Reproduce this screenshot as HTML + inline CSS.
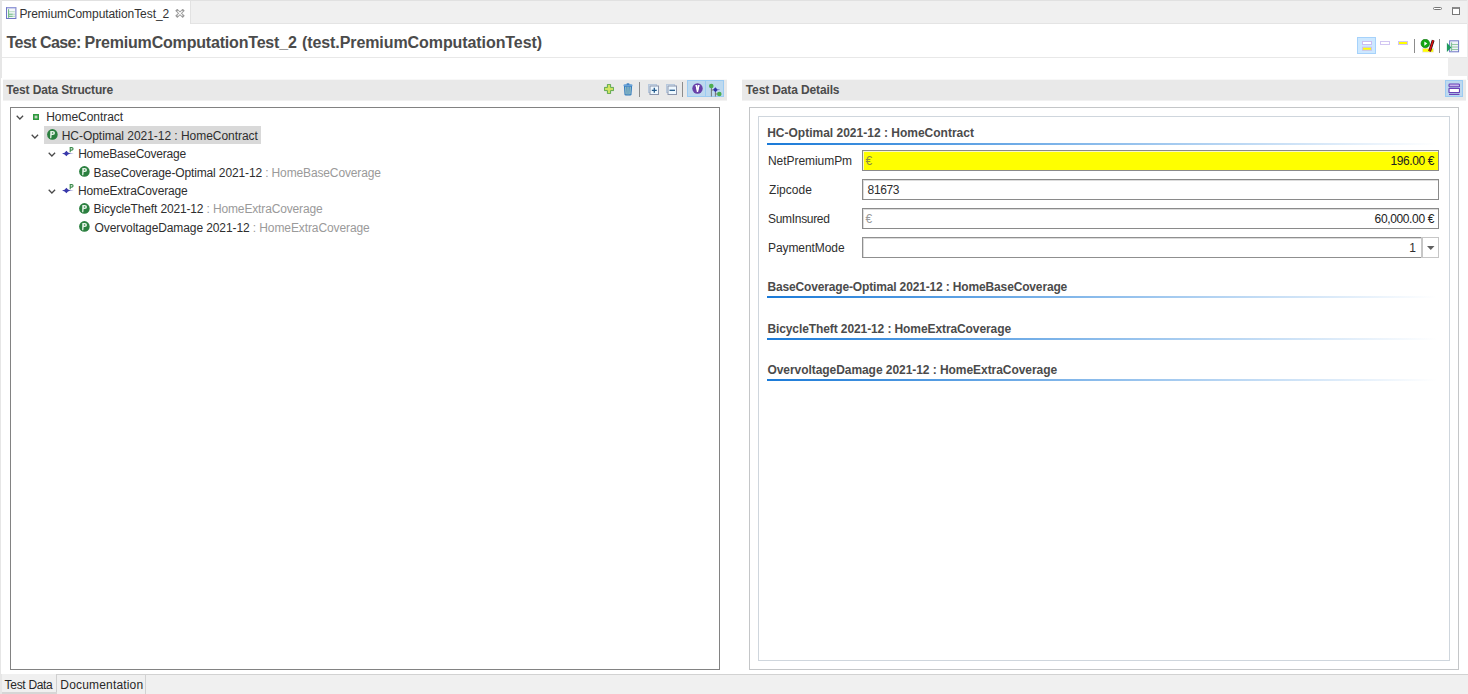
<!DOCTYPE html>
<html><head><meta charset="utf-8">
<style>
*{box-sizing:border-box;margin:0;padding:0}
html,body{width:1468px;height:694px;overflow:hidden;background:#fff}
body{position:relative;font-family:"Liberation Sans",sans-serif;font-size:12px;color:#2e2e2e}
.a{position:absolute}
.t{position:absolute;white-space:pre;line-height:14px}
.b{font-weight:bold}
.g{color:#9a9a9a}
.sec{color:#4b4b4b}
.fld{position:absolute;left:862px;width:577px;height:21px;border:1px solid #8a8a8a;background:#fff;box-shadow:inset 1px 1px 0 #dcdcdc}
.chev{position:absolute}
</style></head><body>

<!-- ===== top tab bar ===== -->
<div class="a" style="left:0;top:0;width:1468px;height:24px;background:#f0f0f0"></div>
<div class="a" style="left:0;top:0;width:1468px;height:1px;background:#e1e1e1"></div>
<div class="a" style="left:0;top:23px;width:1468px;height:1px;background:#e4e4e4"></div>
<div class="a" style="left:1467px;top:0;width:1px;height:80px;background:#ececec"></div>
<div class="a" style="left:2px;top:1px;width:188px;height:23px;background:#fff"></div>
<div class="a" style="left:190px;top:1px;width:1px;height:23px;background:#e2e2e2"></div>
<!-- tab icon -->
<svg class="a" style="left:6px;top:7px" width="11" height="12" viewBox="0 0 11 12">
 <rect x="0.5" y="0.6" width="9.4" height="10.9" fill="#f4f7fa" stroke="#6e76c4"/>
 <path d="M1 0.9h8.9" stroke="#a4aae2" stroke-width="1"/>
 <path d="M2.6 2.2v8.6" stroke="#5aae72" stroke-width="0.9"/>
 <path d="M3 4.7h5.8" stroke="#b4d8c0" stroke-width="0.9"/>
 <path d="M3 7.2h3.8M3 9.3h3.8" stroke="#4ea868" stroke-width="0.9"/>
 <path d="M6.8 7.2h2.2M6.8 9.3h2.2" stroke="#a8d4b4" stroke-width="0.9"/>
</svg>
<div class="t" style="left:19.4px;top:6.8px;color:#333;letter-spacing:-0.07px">PremiumComputationTest_2</div>
<svg class="a" style="left:175px;top:8.5px" width="10" height="9" viewBox="0 0 10 9">
 <path d="M2.3 1.7L7.7 6.9M7.7 1.7L2.3 6.9" stroke="#9a9a9a" stroke-width="2.9" stroke-linecap="square" fill="none"/>
 <path d="M2.6 2L7.4 6.6M7.4 2L2.6 6.6" stroke="#fff" stroke-width="1.1" fill="none"/>
</svg>
<!-- min/max -->
<div class="a" style="left:1433px;top:7px;width:9px;height:3px;border:1px solid #777;border-radius:1.5px;background:#fff"></div>
<div class="a" style="left:1452px;top:7px;width:8px;height:8px;border:1px solid #777;border-top:2px solid #8a8a8a;background:#fff"></div>

<!-- left frame border -->
<div class="a" style="left:0;top:0;width:2px;height:78px;background:#e6e6e6"></div>
<div class="a" style="left:0;top:78px;width:1px;height:596px;background:#e6e6e6"></div>

<!-- ===== form header ===== -->
<div class="t b" style="left:6.5px;top:34px;font-size:16px;line-height:18px;color:#4b4b4b;letter-spacing:-0.55px">Test Case:</div>
<div class="t b" style="left:84.5px;top:34px;font-size:16px;line-height:18px;color:#4b4b4b;letter-spacing:-0.187px">PremiumComputationTest_2</div>
<div class="t b" style="left:301.9px;top:34px;font-size:16px;line-height:18px;color:#4b4b4b;letter-spacing:-0.079px">(test.PremiumComputationTest)</div>
<div class="a" style="left:2px;top:57px;width:1465px;height:1px;background:#e8e8e8"></div>

<!-- header toolbar -->
<div class="a" style="left:1357px;top:37px;width:19px;height:17px;background:#cde8ff;border:1px solid #a6d2fb"></div>
<svg class="a" style="left:1362px;top:41px" width="10" height="10" viewBox="0 0 10 10">
 <rect x="0.5" y="0.5" width="9" height="3" fill="#fff" stroke="#cbbdf0"/>
 <rect x="0.5" y="6.2" width="9" height="3" fill="#ffff00" stroke="#cbbdf0"/>
</svg>
<svg class="a" style="left:1380px;top:41px" width="10" height="4.5" viewBox="0 0 10 4.5">
 <rect x="0.5" y="0.5" width="9" height="3" fill="#fff" stroke="#d2c6f2"/>
</svg>
<svg class="a" style="left:1398px;top:41px" width="10" height="4.5" viewBox="0 0 10 4.5">
 <rect x="0.5" y="0.5" width="9" height="3" fill="#ffff00" stroke="#d2c6f2"/>
</svg>
<div class="a" style="left:1414px;top:39px;width:1px;height:14px;background:#8c8c8c"></div>
<svg class="a" style="left:1420px;top:39px" width="15" height="14" viewBox="0 0 15 14">
 <rect x="2.5" y="9.3" width="11" height="3.8" fill="#ffff00" stroke="#e4dcf8" stroke-width="0.6"/>
 <circle cx="5.3" cy="4.5" r="4.3" fill="#12a612"/>
 <circle cx="5.3" cy="4.5" r="4.3" fill="none" stroke="#0a6a0a" stroke-width="0.6"/>
 <path d="M4.3 2.5v4.2l3-2.1z" fill="#fff"/>
 <path d="M13.2 1.2L9.6 12.2" stroke="#111" stroke-width="2.8"/>
 <path d="M13.2 1.2L9.6 12.2" stroke="#e01010" stroke-width="1.6"/>
</svg>
<div class="a" style="left:1439px;top:39px;width:1px;height:14px;background:#8c8c8c"></div>
<svg class="a" style="left:1446px;top:39.5px" width="14" height="13" viewBox="0 0 14 13">
 <rect x="3.6" y="0.8" width="9" height="11" fill="#eef2f8" stroke="#7078c6" stroke-width="1"/>
 <path d="M5.6 2.5v8.5" stroke="#5aae72" stroke-width="0.8"/>
 <path d="M6 4.5h6M6 7h6M6 9.5h6" stroke="#88c49a" stroke-width="0.9"/>
 <path d="M0.9 2.8v9.3l4.4-4.6z" fill="#1e9a5e"/>
</svg>

<!-- body grey block -->
<div class="a" style="left:1448px;top:58px;width:19px;height:18px;background:#ededed"></div>

<!-- ===== LEFT SECTION ===== -->
<div class="a" style="left:3px;top:80px;width:724px;height:20px;background:#e9e9e9;box-shadow:0 1px 0 #f2f2f2,0 -1px 0 #f8f8f8"></div>
<div class="t b sec" style="left:6.3px;top:82.9px;letter-spacing:-0.156px">Test Data Structure</div>
<!-- tree toolbar -->
<svg class="a" style="left:604px;top:84px" width="10" height="10" viewBox="0 0 10 10">
 <path d="M3.4 0.4h3.2v3h3v3.2h-3v3h-3.2v-3h-3v-3.2h3z" fill="#c4dc5c" stroke="#449a3c" stroke-width="0.8"/>
 <path d="M5 1.2v7.6M1.2 5h7.6" stroke="#d8e868" stroke-width="1"/>
</svg>
<svg class="a" style="left:623px;top:82.5px" width="10" height="13" viewBox="0 0 10 13">
 <path d="M0.9 3h8.2l-0.6 8.2q-0.2 1.2-1.4 1.2h-4.2q-1.2 0-1.4-1.2z" fill="#2f78bc"/>
 <path d="M2.8 3.8l0.3 7.6M5 3.8v7.8M7.2 3.8l-0.3 7.6" stroke="#cfe6c8" stroke-width="0.9"/>
 <ellipse cx="5" cy="2.2" rx="4.7" ry="1.2" fill="#6aa2d8"/>
 <ellipse cx="5" cy="1" rx="1.6" ry="0.8" fill="#2f78bc"/>
</svg>
<div class="a" style="left:639px;top:82px;width:1px;height:14.5px;background:#8c8c8c"></div>
<svg class="a" style="left:647.5px;top:84px" width="11" height="11" viewBox="0 0 11 11">
 <rect x="0.5" y="0.5" width="8" height="8" fill="#dbeaf6" stroke="#b8c8dc"/>
 <rect x="2" y="2" width="8.5" height="8.5" fill="#eef8ff" stroke="#8a94ac"/>
 <path d="M6.3 3.8v5M3.8 6.3h5" stroke="#235a8c" stroke-width="1.3"/>
</svg>
<svg class="a" style="left:666px;top:84px" width="11" height="11" viewBox="0 0 11 11">
 <rect x="0.5" y="0.5" width="8" height="8" fill="#dbeaf6" stroke="#b8c8dc"/>
 <rect x="2" y="2" width="8.5" height="8.5" fill="#eef8ff" stroke="#8a94ac"/>
 <path d="M3.5 6.3h5.5" stroke="#235a8c" stroke-width="1.3"/>
</svg>
<div class="a" style="left:682px;top:82px;width:1px;height:14.5px;background:#8c8c8c"></div>
<div class="a" style="left:687px;top:80px;width:37px;height:17px;background:#bdd9ef;border:1px solid #9ccbf2"></div>
<div class="a" style="left:705px;top:81px;width:1px;height:15px;background:#9ccbf2"></div>
<svg class="a" style="left:691.5px;top:83.3px" width="11" height="11" viewBox="0 0 11 11">
 <circle cx="5.5" cy="5.5" r="5.2" fill="#6840a8"/>
 <path d="M3.4 2.2h1.8l0.5 5.8h-0.4zM5.8 2.2h1.8l-1.9 6.8h-0.3z" fill="#fff"/>
 <path d="M4.2 2.2L5.5 8.8L6.8 2.2" stroke="#fff" stroke-width="1.3" fill="none"/>
</svg>
<svg class="a" style="left:708px;top:82.5px" width="15" height="14" viewBox="0 0 15 14">
 <path d="M3.4 3v10.5M3.4 7h2M7.4 9v4.5M7.4 11h2" stroke="#6a6a6a" stroke-width="0.9"/>
 <circle cx="3.3" cy="3" r="2.3" fill="#4cae50"/>
 <path d="M5 6.8L7.4 4.3L9.4 6.4L12.3 6.8L9.4 7.2L7.4 9.3z" fill="#3232a8"/>
 <circle cx="11.3" cy="11" r="2.3" fill="#4cae50"/>
</svg>

<!-- tree -->
<div class="a" style="left:10px;top:107px;width:710px;height:563px;border:1px solid #828282"></div>
<div class="a" style="left:44px;top:126px;width:217px;height:18px;background:#d9d9d9"></div>

<!-- chevrons -->
<svg class="chev" style="left:15.5px;top:115px" width="8" height="5" viewBox="0 0 8 5"><path d="M0.7 0.7L3.9 4L7.1 0.7" stroke="#4a4a4a" stroke-width="1.25" fill="none"/></svg>
<svg class="chev" style="left:31.3px;top:133.5px" width="8" height="5" viewBox="0 0 8 5"><path d="M0.7 0.7L3.9 4L7.1 0.7" stroke="#4a4a4a" stroke-width="1.25" fill="none"/></svg>
<svg class="chev" style="left:47.7px;top:151.9px" width="8" height="5" viewBox="0 0 8 5"><path d="M0.7 0.7L3.9 4L7.1 0.7" stroke="#4a4a4a" stroke-width="1.25" fill="none"/></svg>
<svg class="chev" style="left:47.7px;top:188.7px" width="8" height="5" viewBox="0 0 8 5"><path d="M0.7 0.7L3.9 4L7.1 0.7" stroke="#4a4a4a" stroke-width="1.25" fill="none"/></svg>

<!-- icons -->
<svg class="a" style="left:33px;top:113.8px" width="6" height="6" viewBox="0 0 6 6"><rect x="0.8" y="0.8" width="4.4" height="4.4" fill="#c4d4c4" stroke="#2e9a3e" stroke-width="1.6"/></svg>
<svg class="a" style="left:46.8px;top:128.9px" width="11" height="11" viewBox="0 0 11 11"><circle cx="5.4" cy="5.4" r="5.3" fill="#2c8040"/><path d="M3.3 1.9h2.6a2 2 0 0 1 0 4.2H4.7l-0.4 3.2h-1.2z" fill="#e4f2e6"/><circle cx="5.6" cy="4" r="0.8" fill="#2c8040"/></svg>
<svg class="a" style="left:62px;top:147px" width="12" height="10" viewBox="0 0 12 10"><path d="M0 6.5Q3 6.1 4.4 3.7Q5.8 6.1 8 6.3L11.8 6.5L8 6.7Q5.8 6.9 4.4 9.3Q3 6.9 0 6.5z" fill="#3838aa"/><path d="M8.2 5.2V0.6h1.6a1.2 1.2 0 0 1 0 2.5H8.2" stroke="#3c8c4c" stroke-width="1.1" fill="none"/></svg>
<svg class="a" style="left:78.6px;top:166.1px" width="11" height="11" viewBox="0 0 11 11"><circle cx="5.4" cy="5.4" r="5.3" fill="#2c8040"/><path d="M3.3 1.9h2.6a2 2 0 0 1 0 4.2H4.7l-0.4 3.2h-1.2z" fill="#e4f2e6"/><circle cx="5.6" cy="4" r="0.8" fill="#2c8040"/></svg>
<svg class="a" style="left:62px;top:183.8px" width="12" height="10" viewBox="0 0 12 10"><path d="M0 6.5Q3 6.1 4.4 3.7Q5.8 6.1 8 6.3L11.8 6.5L8 6.7Q5.8 6.9 4.4 9.3Q3 6.9 0 6.5z" fill="#3838aa"/><path d="M8.2 5.2V0.6h1.6a1.2 1.2 0 0 1 0 2.5H8.2" stroke="#3c8c4c" stroke-width="1.1" fill="none"/></svg>
<svg class="a" style="left:78.6px;top:202.5px" width="11" height="11" viewBox="0 0 11 11"><circle cx="5.4" cy="5.4" r="5.3" fill="#2c8040"/><path d="M3.3 1.9h2.6a2 2 0 0 1 0 4.2H4.7l-0.4 3.2h-1.2z" fill="#e4f2e6"/><circle cx="5.6" cy="4" r="0.8" fill="#2c8040"/></svg>
<svg class="a" style="left:78.6px;top:221px" width="11" height="11" viewBox="0 0 11 11"><circle cx="5.4" cy="5.4" r="5.3" fill="#2c8040"/><path d="M3.3 1.9h2.6a2 2 0 0 1 0 4.2H4.7l-0.4 3.2h-1.2z" fill="#e4f2e6"/><circle cx="5.6" cy="4" r="0.8" fill="#2c8040"/></svg>

<!-- tree text -->
<div class="t" style="left:46.2px;top:110.3px;letter-spacing:-0.036px">HomeContract</div>
<div class="t" style="left:61.7px;top:128.7px;letter-spacing:-0.037px">HC-Optimal 2021-12 : HomeContract</div>
<div class="t" style="left:78.2px;top:147.1px;letter-spacing:-0.233px">HomeBaseCoverage</div>
<div class="t" style="left:93.6px;top:165.6px;letter-spacing:-0.133px">BaseCoverage-Optimal 2021-12 <span class="g">: HomeBaseCoverage</span></div>
<div class="t" style="left:78px;top:184px;letter-spacing:-0.144px">HomeExtraCoverage</div>
<div class="t" style="left:93.6px;top:202.4px;letter-spacing:-0.146px">BicycleTheft 2021-12 <span class="g">: HomeExtraCoverage</span></div>
<div class="t" style="left:94.6px;top:220.8px;letter-spacing:-0.098px">OvervoltageDamage 2021-12 <span class="g">: HomeExtraCoverage</span></div>

<!-- ===== RIGHT SECTION ===== -->
<div class="a" style="left:742px;top:80px;width:724px;height:20px;background:#e9e9e9;box-shadow:0 1px 0 #f2f2f2,0 -1px 0 #f8f8f8"></div>
<div class="t b sec" style="left:745.8px;top:82.9px;letter-spacing:-0.131px">Test Data Details</div>
<div class="a" style="left:1445px;top:80px;width:18px;height:17px;background:#bdd9ef;border:1px solid #9ccbf2"></div>
<svg class="a" style="left:1448px;top:83px" width="12" height="13" viewBox="0 0 12 13">
 <rect x="1" y="1" width="10.5" height="2.8" rx="0.9" fill="#c8b4ec" stroke="#6a44b8" stroke-width="1.1"/>
 <rect x="1" y="5.4" width="10.5" height="4.2" rx="0.6" fill="#fff" stroke="#6a44b8" stroke-width="1.2"/>
 <path d="M1 11.5h10.5" stroke="#6a44b8" stroke-width="1"/>
</svg>

<div class="a" style="left:749px;top:107px;width:710px;height:563px;border:1px solid #c4c6c8"></div>
<div class="a" style="left:758px;top:116px;width:692px;height:545px;border:1px solid #cfd6dd"></div>

<div class="t b sec" style="left:767.2px;top:125.8px;letter-spacing:0px">HC-Optimal 2021-12 : HomeContract</div>
<div class="a" style="left:767px;top:143px;width:670px;height:2px;background:linear-gradient(to right,#1a7ad8,rgba(26,122,216,0))"></div>

<div class="t" style="left:768px;top:154.3px;letter-spacing:-0.055px">NetPremiumPm</div>
<div class="t" style="left:769px;top:182.9px;letter-spacing:0.05px">Zipcode</div>
<div class="t" style="left:768px;top:211.9px;letter-spacing:-0.311px">SumInsured</div>
<div class="t" style="left:768px;top:241.2px;letter-spacing:-0.08px">PaymentMode</div>

<div class="fld" style="top:150px;background:#ffff00;box-shadow:inset 1px 1px 0 #f6f6c8"></div>
<div class="t" style="left:865.5px;top:154.3px;color:#8c8c44">€</div>
<div class="t" style="left:1380px;top:154.3px;width:54px;text-align:right;color:#222;letter-spacing:-0.4px">196.00 €</div>

<div class="fld" style="top:179px"></div>
<div class="t" style="left:867.6px;top:183.2px;letter-spacing:-0.375px">81673</div>

<div class="fld" style="top:208px"></div>
<div class="t" style="left:865.5px;top:212.2px;color:#9a9a9a">€</div>
<div class="t" style="left:1360px;top:212.2px;width:74px;text-align:right;color:#222;letter-spacing:-0.36px">60,000.00 €</div>

<div class="a" style="left:862px;top:237px;width:560px;height:21px;border:1px solid #8f8f8f;box-shadow:inset 1px 1px 0 #dcdcdc"></div>
<div class="a" style="left:1421px;top:237px;width:2px;height:21px;background:#c8c8c8"></div>
<div class="a" style="left:1422px;top:237px;width:17px;height:21px;border:1px solid #c6c6c6"></div>
<div class="t" style="left:1398px;top:241.2px;width:18px;text-align:right">1</div>
<svg class="a" style="left:1427px;top:246px" width="8" height="4" viewBox="0 0 8 4"><path d="M0 0h7.5L3.75 4z" fill="#606060"/></svg>

<div class="t b sec" style="left:767.4px;top:279.7px;letter-spacing:-0.15px">BaseCoverage-Optimal 2021-12 : HomeBaseCoverage</div>
<div class="a" style="left:767px;top:296px;width:670px;height:2px;background:linear-gradient(to right,#1a7ad8,rgba(26,122,216,0))"></div>
<div class="t b sec" style="left:767.4px;top:321.6px;letter-spacing:-0.097px">BicycleTheft 2021-12 : HomeExtraCoverage</div>
<div class="a" style="left:767px;top:338px;width:670px;height:2px;background:linear-gradient(to right,#1a7ad8,rgba(26,122,216,0))"></div>
<div class="t b sec" style="left:767.4px;top:362.9px;letter-spacing:-0.055px">OvervoltageDamage 2021-12 : HomeExtraCoverage</div>
<div class="a" style="left:767px;top:379px;width:670px;height:2px;background:linear-gradient(to right,#1a7ad8,rgba(26,122,216,0))"></div>

<!-- ===== BOTTOM TABS ===== -->
<div class="a" style="left:0;top:674px;width:1468px;height:20px;background:#f0f0f0"></div>
<div class="a" style="left:57px;top:674px;width:1411px;height:1px;background:#d2d2d2"></div>
<div class="a" style="left:0;top:674px;width:2px;height:20px;background:#e6e6e6"></div>
<div class="a" style="left:56px;top:674px;width:1px;height:19px;background:#cfcfcf"></div>
<div class="a" style="left:2px;top:692px;width:55px;height:2px;background:#d6d6d6"></div>
<div class="a" style="left:145px;top:675px;width:1px;height:19px;background:#d2d2d2"></div>
<div class="t" style="left:4.6px;top:678px;color:#282828;letter-spacing:-0.312px">Test Data</div>
<div class="t" style="left:60.3px;top:678px;color:#282828;letter-spacing:0.175px">Documentation</div>

</body></html>
